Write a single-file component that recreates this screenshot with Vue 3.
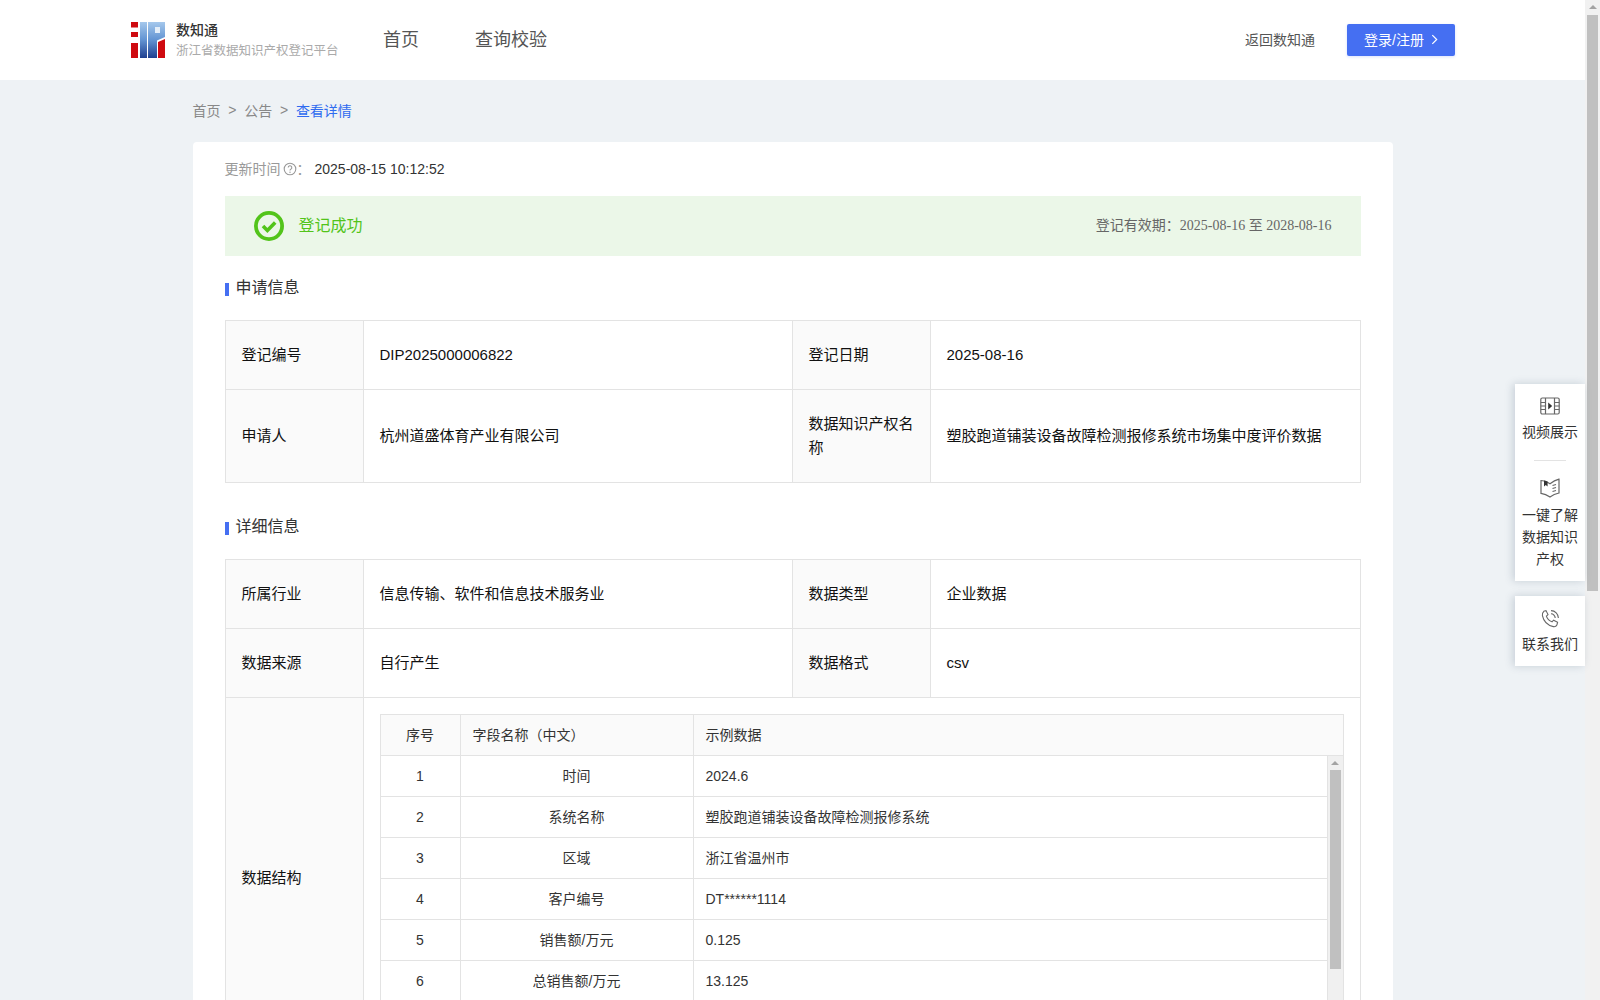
<template>
  <div class="page">
    <div class="main">
      <!-- 顶部导航 -->
      <header class="top">
        <div class="brand">
          <svg class="logo" viewBox="0 0 34 36" width="34" height="36">
            <defs>
              <linearGradient id="lg" x1="0" y1="0" x2="0" y2="1">
                <stop offset="0" stop-color="#a5c8ec" />
                <stop offset="0.5" stop-color="#6293d2" />
                <stop offset="1" stop-color="#1f3f8f" />
              </linearGradient>
            </defs>
            <rect x="0" y="0" width="7" height="5.5" fill="#cf0a10" />
            <rect x="0" y="10" width="7" height="5" fill="#cf0a10" />
            <rect x="0" y="21" width="7" height="15" fill="#cf0a10" />
            <rect x="9" y="0" width="7" height="36" fill="url(#lg)" />
            <path d="M17 0h17v15l-8 3.4V36h-9z" fill="url(#lg)" />
            <rect x="24" y="5" width="5" height="6" fill="#e4eef9" />
            <path d="M27 20l7-3v19h-7z" fill="#cf0a10" />
          </svg>
          <div class="brand-text">
            <div class="brand-name">数知通</div>
            <div class="brand-sub">浙江省数据知识产权登记平台</div>
          </div>
        </div>
        <nav class="nav">
          <a>首页</a>
          <a>查询校验</a>
        </nav>
        <a class="back">返回数知通</a>
        <button class="login">
          登录/注册
          <svg viewBox="0 0 8 12" width="7" height="11"><path d="M1.5 1l5 5-5 5" fill="none" stroke="#fff" stroke-width="1.4" /></svg>
        </button>
      </header>

      <div class="crumbs">
        <span>首页</span><i>&gt;</i><span>公告</span><i>&gt;</i><span class="now">查看详情</span>
      </div>

      <div class="card">
        <div class="update">
          <span class="update-label">更新时间</span>
          <svg class="help" viewBox="0 0 14 14" width="14" height="14">
            <circle cx="7" cy="7" r="5.8" fill="none" stroke="#999" stroke-width="1.1" />
            <path d="M5.2 5.6a1.8 1.8 0 1 1 2.6 1.6c-.6.3-.8.6-.8 1.2" fill="none" stroke="#999" stroke-width="1.1" />
            <circle cx="7" cy="10.2" r=".7" fill="#999" />
          </svg>
          <span class="update-label">：</span>
          <span class="update-time">2025-08-15 10:12:52</span>
        </div>

        <div class="result">
          <svg viewBox="0 0 30 30" width="30" height="30">
            <circle cx="15" cy="15" r="13.1" fill="none" stroke="#52c41a" stroke-width="3.8" />
            <path d="M9 15l4.4 4.4L21.2 11.6" fill="none" stroke="#52c41a" stroke-width="3.6" />
          </svg>
          <span class="result-text">登记成功</span>
          <span class="valid">登记有效期：<em>2025-08-16 至 2028-08-16</em></span>
        </div>

        <h3 class="sec sec-first">申请信息</h3>
        <div class="grid">
          <div class="lab row-a">登记编号</div>
          <div class="val row-a">DIP2025000006822</div>
          <div class="lab row-a">登记日期</div>
          <div class="val row-a">2025-08-16</div>
          <div class="lab row-b">申请人</div>
          <div class="val row-b">杭州道盛体育产业有限公司</div>
          <div class="lab row-b">数据知识产权名称</div>
          <div class="val row-b">塑胶跑道铺装设备故障检测报修系统市场集中度评价数据</div>
        </div>

        <h3 class="sec sec-second">详细信息</h3>
        <div class="grid">
          <div class="lab row-a">所属行业</div>
          <div class="val row-a">信息传输、软件和信息技术服务业</div>
          <div class="lab row-a">数据类型</div>
          <div class="val row-a">企业数据</div>
          <div class="lab row-a">数据来源</div>
          <div class="val row-a">自行产生</div>
          <div class="lab row-a">数据格式</div>
          <div class="val row-a">csv</div>
          <div class="lab">数据结构</div>
          <div class="val val-wide">
            <div class="inner">
              <div class="inner-head">
                <div class="c1">序号</div>
                <div class="c2 head-left">字段名称（中文）</div>
                <div class="c3">示例数据</div>
              </div>
              <div class="inner-body">
                <div class="inner-rows">
                  <div v-for="r in rows" :key="r.no" class="inner-row">
                    <div class="c1">{{ r.no }}</div>
                    <div class="c2">{{ r.name }}</div>
                    <div class="c3">{{ r.sample }}</div>
                  </div>
                </div>
                <div class="mini-bar">
                  <span class="arrow"></span>
                  <span class="mini-thumb"></span>
                </div>
              </div>
            </div>
          </div>
        </div>
      </div>

      <!-- 右侧悬浮 -->
      <aside class="float">
        <div class="float-box">
          <div class="float-item">
            <svg viewBox="0 0 20 18" width="20" height="18" fill="none" stroke="#666" stroke-width="1.2">
              <rect x=".8" y="1" width="18.4" height="16" rx="1.5" />
              <path d="M5.5 1v16M14.5 1v16M.8 5.5h4.7M.8 9h4.7M.8 12.5h4.7M14.5 5.5h4.7M14.5 9h4.7M14.5 12.5h4.7" />
              <path d="M8.2 5.6l4 3.4-4 3.4z" fill="#333" stroke="none" />
            </svg>
            <span>视频展示</span>
          </div>
          <div class="float-line"></div>
          <div class="float-item">
            <svg viewBox="0 0 20 20" width="20" height="20" fill="none" stroke="#666" stroke-width="1.2">
              <path d="M1 2.5c3 0 6 1 9 3.2 3-2.2 5.5-3.5 9-4.5v13.8c-3.5.8-6.5 2.2-9 4-2.5-1.8-5.5-3.2-9-3.6z" />
              <path d="M12.5 7.5l3.5-1M12.5 10.5l3.5-1M12.5 13.5l3.5-1" />
              <path d="M4 2.5v6l1.8-1.4L7.6 8.6V3.4z" fill="#333" stroke="none" />
            </svg>
            <span>一键了解<br />数据知识<br />产权</span>
          </div>
        </div>
        <div class="float-box">
          <div class="float-item float-tel">
            <svg viewBox="0 0 20 20" width="20" height="20" fill="none" stroke="#666" stroke-width="1.1">
              <path d="M3.6 2.2L6 1.6l2 4-1.6 1.6c.8 2.6 3 4.8 5.6 5.6l1.6-1.6 4 2-.6 2.4c-.4 1.6-2 2.4-3.6 2-5.6-1.2-9.8-5.4-11-11-.4-1.6.4-3.2 1.6-4.4z" />
              <path d="M11 1.6a7.4 7.4 0 0 1 7.4 7.4M11 4.8A4.2 4.2 0 0 1 15.2 9" />
            </svg>
            <span>联系我们</span>
          </div>
        </div>
      </aside>
    </div>

    <!-- 页面滚动条 -->
    <div class="page-bar">
      <span class="arrow"></span>
      <span class="page-thumb"></span>
    </div>
  </div>
</template>

<script setup>
/* 数据结构 示例行 */
const rows = [
  { no: 1, name: '时间', sample: '2024.6' },
  { no: 2, name: '系统名称', sample: '塑胶跑道铺装设备故障检测报修系统' },
  { no: 3, name: '区域', sample: '浙江省温州市' },
  { no: 4, name: '客户编号', sample: 'DT******1114' },
  { no: 5, name: '销售额/万元', sample: '0.125' },
  { no: 6, name: '总销售额/万元', sample: '13.125' }
]
</script>

<style>
html, body { margin: 0; height: 100%; overflow: hidden; }
</style>

<style scoped>
.page {
  display: flex; height: 1000px; overflow: hidden; background: #eef2f5;
  font-family: "Liberation Sans", "Noto Sans CJK SC", sans-serif; font-size: 14px; color: #333;
}
.main { flex: 1; min-width: 0; position: relative; }

/* header */
.top { height: 80px; background: #fff; display: flex; align-items: center; padding: 0 130px 0 131px; }
.brand { display: flex; align-items: center; width: 252px; }
.logo { flex: none; }
.brand-text { margin-left: 11px; }
.brand-name { font-size: 14px; line-height: 18px; font-weight: 500; color: #333; }
.brand-sub { font-size: 12.5px; line-height: 18px; color: #aaa; margin-top: 3px; white-space: nowrap; }
.nav { display: flex; gap: 56px; flex: 1; padding-bottom: 4px; }
.nav a { font-size: 18px; color: #555; }
.back { font-size: 14px; color: #555; margin-right: 32px; padding-bottom: 2px; }
.login {
  width: 108px; height: 32px; border: 0; border-radius: 2px; background: #456ff2; color: #fff;
  font: inherit; display: flex; align-items: center; justify-content: center; gap: 7px;
  padding: 0 0 3px; box-shadow: 0 1px 3px rgba(69, 111, 242, .2);
}
.login svg { margin-top: 2px; }

.crumbs { width: 1200px; margin: 0 auto; height: 62px; box-sizing: border-box; padding-bottom: 3px; display: flex; align-items: center; color: #888; }
.crumbs i { font-style: normal; margin: 0 7.75px; }
.crumbs .now { color: #2f6bf0; }

/* card */
.card { width: 1200px; margin: 0 auto; background: #fff; border-radius: 4px; padding: 0 32px; box-sizing: border-box; }
.update { height: 54px; display: flex; align-items: center; }
.update-label { color: #999; margin-top: -3px; }
.help { margin-left: 2px; }
.update-time { color: #333; margin-left: 4px; }
.result { height: 60px; background: #ebf7e8; display: flex; align-items: center; padding: 0 29px; }
.result-text { color: #52c41a; font-size: 16px; margin-left: 15px; flex: 1; padding-bottom: 5px; }
.valid { color: #666; padding-bottom: 5px; }
.valid em { font-style: normal; font-family: "Liberation Serif", "Noto Sans CJK SC", serif; }
.sec {
  margin: 0; font-size: 16px; font-weight: 400; color: #333; line-height: 20px;
  display: flex; align-items: center;
}
.sec::before { content: ""; width: 4px; height: 13px; background: #456ff2; margin-right: 7px; margin-top: 3px; }
.sec-first { padding: 22px 0 22px; }
.sec-second { padding: 34px 0 22px; }

/* 表格 */
.grid {
  display: grid; grid-template-columns: 138px 429px 138px 1fr;
  border-top: 1px solid #e3e3e3; border-left: 1px solid #e3e3e3;
}
.lab, .val {
  border-right: 1px solid #e3e3e3; border-bottom: 1px solid #e3e3e3; padding: 0 16px;
  display: flex; align-items: center; color: #111; font-size: 15px; line-height: 24px; box-sizing: border-box;
}
.lab { background: #fafafa; }
.row-a { height: 69px; }
.row-b { height: 93px; }
.val-wide { grid-column: 2 / 5; padding: 16px; align-items: flex-start; }

.inner { width: 100%; border: 1px solid #e3e3e3; box-sizing: border-box; font-size: 14px; color: #333; }
.inner-head { display: flex; height: 40px; background: #fafafa; border-bottom: 1px solid #e3e3e3; box-sizing: content-box; }
.inner-body { display: flex; height: 284px; }
.inner-rows { flex: 1; min-width: 0; }
.inner-row { display: flex; height: 40px; border-bottom: 1px solid #e3e3e3; box-sizing: content-box; }
.c1, .c2, .c3 { display: flex; align-items: center; box-sizing: border-box; }
.c1 { width: 80px; justify-content: center; border-right: 1px solid #e3e3e3; }
.c2 { width: 233px; justify-content: center; border-right: 1px solid #e3e3e3; }
.head-left { justify-content: flex-start; padding-left: 12px; }
.c3 { flex: 1; padding-left: 12px; }

/* 滚动条 */
.mini-bar { width: 15px; flex: none; background: #f0f0f0; border-left: 1px solid #e3e3e3; display: flex; flex-direction: column; align-items: center; }
.mini-thumb { width: 11px; height: 199px; background: #c0c0c0; margin-top: 5px; }
.arrow { width: 0; height: 0; border: 4px solid transparent; border-top: 0; border-bottom: 4px solid #a3a3a3; margin-top: 5px; flex: none; }
.page-bar { width: 15px; flex: none; background: #f1f1f1; display: flex; flex-direction: column; align-items: center; }
.page-thumb { width: 11px; height: 576px; background: #c0c0c0; margin-top: 6px; }

/* 悬浮 */
.float { position: absolute; right: 0; top: 384px; width: 70px; display: flex; flex-direction: column; gap: 15px; }
.float-box { background: #fff; box-shadow: -2px 0 8px rgba(60, 80, 110, .22); padding: 13px 0 11px; }
.float-item { display: flex; flex-direction: column; align-items: center; gap: 6px; font-size: 14px; line-height: 22px; color: #333; text-align: center; }
.float-tel { gap: 4px; }
.float-line { width: 32px; height: 1px; background: #e3e3e3; margin: 17px auto; }
</style>
